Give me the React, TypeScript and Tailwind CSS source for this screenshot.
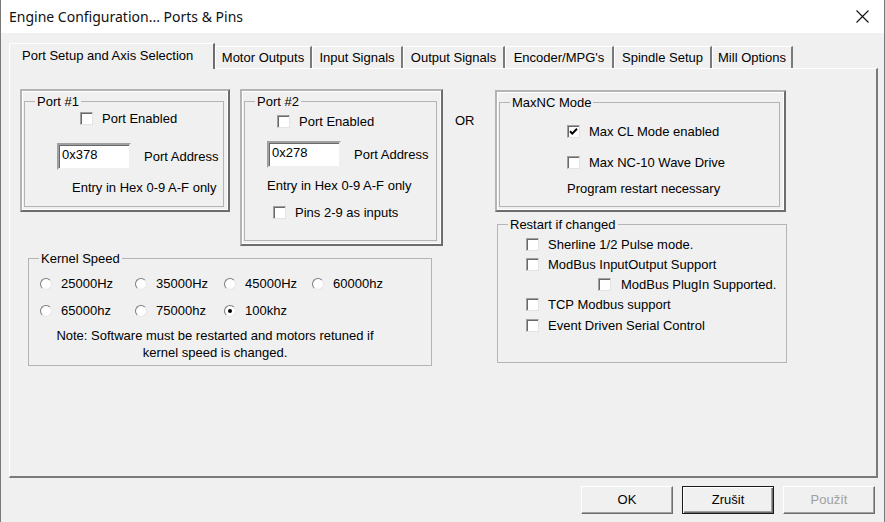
import React from 'react';

function CheckBox({ checked = false }: { checked?: boolean }) {
  return (
    <span className="w-[13px] h-[13px] shrink-0 bg-white border border-t-[#a0a0a0] border-l-[#a0a0a0] border-r-[#e3e3e3] border-b-[#e3e3e3] shadow-[inset_1px_1px_0_#696969] flex items-center justify-center">
      {checked && (
        <svg width="9" height="9" viewBox="0 0 9 9">
          <path d="M1 4.2 L3.3 6.6 L8 1.8" fill="none" stroke="#000" strokeWidth="2" />
        </svg>
      )}
    </span>
  );
}

function Radio({ checked = false }: { checked?: boolean }) {
  return (
    <span className="w-[12px] h-[12px] shrink-0 rounded-full bg-white border border-t-[#7a7a7a] border-l-[#7a7a7a] border-r-[#e6e6e6] border-b-[#e6e6e6] flex items-center justify-center">
      {checked && <span className="w-[4px] h-[4px] rounded-full bg-black" />}
    </span>
  );
}

function CheckRow({ label, checked, gap = 'gap-[9px]' }: { label: string; checked?: boolean; gap?: string }) {
  return (
    <div className={`flex items-center h-[15px] ${gap}`}>
      <CheckBox checked={checked} />
      <span className="leading-[15px] whitespace-nowrap">{label}</span>
    </div>
  );
}

function HexInput({ value }: { value: string }) {
  return (
    <div className="w-[74px] h-[27px] bg-white border-2 border-t-[#a0a0a0] border-l-[#a0a0a0] border-r-[#f0f0f0] border-b-[#f0f0f0] shadow-[inset_1px_1px_0_#696969] pl-[3px] pt-[2px] leading-[15px]">
      {value}
    </div>
  );
}

// raised 3D panel that wraps a group box
function Frame({ className = '', children }: { className?: string; children: React.ReactNode }) {
  return (
    <div
      className={`border-2 border-t-[#b4b4b4] border-l-[#b4b4b4] border-r-[#6d6d6d] border-b-[#6d6d6d] shadow-[inset_1px_1px_0_#fff,inset_-1px_-1px_0_#fff] pt-[3px] pl-[2px] pr-[4px] pb-[3px] ${className}`}
    >
      {children}
    </div>
  );
}

function Group({ title, className = '', legendCls = 'ml-[10px]', children }: { title: string; className?: string; legendCls?: string; children: React.ReactNode }) {
  return (
    <fieldset className={`border border-[#b4b4b4] min-w-0 ${className}`}>
      <legend className={`px-[2px] leading-[15px] ${legendCls}`}>{title}</legend>
      {children}
    </fieldset>
  );
}

const tabs = [
  { name: 'Motor Outputs', w: 'w-[97px]' },
  { name: 'Input Signals', w: 'w-[91px]' },
  { name: 'Output Signals', w: 'w-[102px]' },
  { name: "Encoder/MPG's", w: 'w-[109px]' },
  { name: 'Spindle Setup', w: 'w-[98px]' },
  { name: 'Mill Options', w: 'w-[81px]' },
];

const speeds = [
  { label: '25000Hz' },
  { label: '35000Hz' },
  { label: '45000Hz' },
  { label: '60000hz' },
  { label: '65000hz' },
  { label: '75000hz' },
  { label: '100khz', checked: true },
];

export default function App() {
  return (
    <div className="w-[885px] h-[522px] overflow-hidden bg-[#f0f0f0] border-x border-[#7a7a7a] text-[13px] text-black font-['Liberation_Sans',Arial,sans-serif] flex flex-col">
      {/* Title bar */}
      <div className="h-[33px] shrink-0 bg-white flex items-center justify-between pl-[8px] pr-[15px]">
        <span className="text-[14px] font-['Noto_Sans',sans-serif] text-[#111]">Engine Configuration... Ports &amp; Pins</span>
        <svg width="13" height="13" viewBox="0 0 13 13">
          <path d="M0.5 0.5 L12.5 12.5 M12.5 0.5 L0.5 12.5" stroke="#111" strokeWidth="1.1" />
        </svg>
      </div>

      {/* Tabs */}
      <div className="mt-[9px] ml-[8px] flex items-end h-[26px] relative z-10">
        <div className="w-[206px] h-[26px] -mb-px bg-[#f0f0f0] border-l border-t border-white border-r-2 border-r-[#6d6d6d] pl-[12px] pt-[4px] leading-[15px]">
          Port Setup and Axis Selection
        </div>
        {tabs.map((t) => (
          <div
            key={t.name}
            className={`${t.w} h-[22px] border-l border-t border-white border-r-2 border-r-[#7a7a7a] text-center pt-[3px] leading-[15px] whitespace-nowrap`}
          >
            {t.name}
          </div>
        ))}
      </div>

      {/* Tab page */}
      <div className="ml-[8px] w-[869px] h-[410px] border-l border-t border-white border-r-2 border-b-2 border-r-[#7a7a7a] border-b-[#7a7a7a] pl-[10px] pt-[20px] grid grid-cols-[475px_292px]">
        {/* Left column */}
        <div className="flex flex-col">
          <div className="flex items-start">
            <Frame className="w-[210px]">
              <Group title="Port #1">
                <div className="h-[97px] flex flex-col">
                  <div className="mt-[2px] pl-[55px]">
                    <CheckRow label="Port Enabled" />
                  </div>
                  <div className="mt-[17px] pl-[32px] flex items-center gap-[13px]">
                    <HexInput value="0x378" />
                    <span>Port Address</span>
                  </div>
                  <div className="mt-[10px] pl-[47px] leading-[15px]">Entry in Hex 0-9 A-F only</div>
                </div>
              </Group>
            </Frame>

            <Frame className="w-[203px] ml-[10px]">
              <Group title="Port #2">
                <div className="h-[131px] flex flex-col">
                  <div className="mt-[5px] pl-[32px]">
                    <CheckRow label="Port Enabled" />
                  </div>
                  <div className="mt-[12px] pl-[22px] flex items-center gap-[13px]">
                    <HexInput value="0x278" />
                    <span>Port Address</span>
                  </div>
                  <div className="mt-[10px] pl-[22px] leading-[15px]">Entry in Hex 0-9 A-F only</div>
                  <div className="mt-[12px] pl-[28px]">
                    <CheckRow label="Pins 2-9 as inputs" />
                  </div>
                </div>
              </Group>
            </Frame>

            <span className="ml-[12px] mt-[24px] leading-[15px]">OR</span>
          </div>

          <Group title="Kernel Speed" className="ml-[8px] mt-[5px] w-[404px]">
            <div className="pl-[11px] pb-[4px]">
              <div className="mt-[8px] grid grid-cols-[95px_89px_88px_80px] gap-y-[7px]">
                {speeds.map((s) => (
                  <div key={s.label} className="h-[20px] flex items-center gap-[9px]">
                    <Radio checked={s.checked} />
                    <span>{s.label}</span>
                  </div>
                ))}
              </div>
              <div className="mt-[6px] ml-[5px] w-[340px] text-center leading-[17px]">
                Note: Software must be restarted and motors retuned if kernel speed is changed.
              </div>
            </div>
          </Group>
        </div>

        {/* Right column */}
        <div className="flex flex-col">
          <Frame className="w-[291px] mt-[1px]">
            <Group title="MaxNC Mode">
              <div className="h-[96px] flex flex-col pl-[67px]">
                <div className="mt-[14px]">
                  <CheckRow label="Max CL Mode enabled" checked />
                </div>
                <div className="mt-[16px]">
                  <CheckRow label="Max NC-10 Wave Drive" />
                </div>
                <div className="mt-[11px] leading-[15px]">Program restart necessary</div>
              </div>
            </Group>
          </Frame>

          <Group title="Restart if changed" className="ml-[2px] mt-[5px] w-[290px]">
            <div className="pl-[28px] pt-[2px] pb-[26px]">
              <div className="h-[20px] flex items-center"><CheckRow label="Sherline 1/2 Pulse mode." /></div>
              <div className="h-[20px] flex items-center"><CheckRow label="ModBus InputOutput Support" /></div>
              <div className="h-[20px] flex items-center pl-[72px]"><CheckRow label="ModBus PlugIn Supported." gap="gap-[10px]" /></div>
              <div className="h-[20px] flex items-center"><CheckRow label="TCP Modbus support" /></div>
              <div className="h-[22px] flex items-center pt-[1px]"><CheckRow label="Event Driven Serial Control" /></div>
            </div>
          </Group>
        </div>
      </div>

      {/* Dialog buttons */}
      <div className="mt-[8px] pr-[9px] flex justify-end gap-[9px]">
        <button className="w-[92px] h-[28px] bg-[#f0f0f0] border border-t-white border-l-white border-r-[#6d6d6d] border-b-[#6d6d6d] shadow-[inset_-1px_-1px_0_#a0a0a0]">
          OK
        </button>
        <button className="w-[92px] h-[28px] bg-[#f0f0f0] border border-[#1a1a1a] shadow-[inset_1px_1px_0_#fff,inset_-1px_-1px_0_#6d6d6d,inset_-2px_-2px_0_#a0a0a0]">
          Zrušit
        </button>
        <button className="w-[92px] h-[28px] bg-[#f0f0f0] text-[#a0a0a0] border border-t-white border-l-white border-r-[#6d6d6d] border-b-[#6d6d6d] shadow-[inset_-1px_-1px_0_#a0a0a0]">
          Použít
        </button>
      </div>
    </div>
  );
}
